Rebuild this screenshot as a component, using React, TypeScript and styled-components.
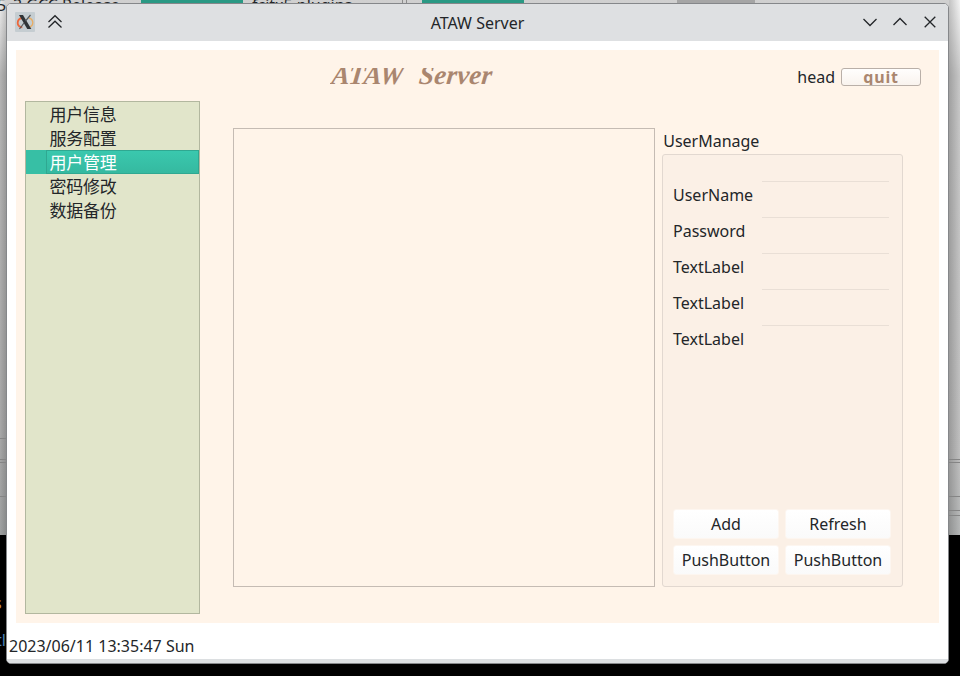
import React from "react";
import styled, { createGlobalStyle } from "styled-components";

const GlobalStyle = createGlobalStyle`
  * { box-sizing: border-box; }
  html, body { margin: 0; background: #000; overflow: hidden; }
  body { font-family: "Noto Sans", "Noto Sans CJK SC", sans-serif; font-size: 16px; color: #232629; }
`;

const Desktop = styled.div`
  position: relative;
  width: 960px;
  height: 676px;
  overflow: hidden;
  background: #000;
`;

const BackWindow = styled.div`
  position: absolute;
  left: 0;
  top: 0;
  width: 960px;
  height: 535px;
  background: linear-gradient(#d0d0d0, #bdbdbd 12%, #b4b4b4 88%, #adaeae);
`;

const Strip = styled.div<{ $side: "left" | "right" }>`
  position: absolute;
  ${(p) => p.$side}: 0;
  top: 0;
  width: ${(p) => (p.$side === "left" ? 6 : 11)}px;
  height: 535px;
  background: ${(p) =>
    p.$side === "left"
      ? "linear-gradient(90deg, rgba(0,0,0,0), rgba(0,0,0,0.14)), linear-gradient(#efefef, #b4b4b4 14%, #a8a8a8 80%, #9fa1a1)"
      : "linear-gradient(270deg, rgba(0,0,0,0), rgba(0,0,0,0.2)), linear-gradient(#f4f4f4, #c8c8c8 14%, #bfbfbf 85%, #b4b6b6)"};
`;

const Rule = styled.div<{ $y: number; $side: "left" | "right" }>`
  position: absolute;
  ${(p) => p.$side}: 0;
  top: ${(p) => p.$y}px;
  width: 12px;
  height: 1px;
  background: #858585;
`;

const Swatch = styled.div<{ $x: number; $w: number; $c: string }>`
  position: absolute;
  left: ${(p) => p.$x}px;
  top: 0;
  width: ${(p) => p.$w}px;
  height: 4px;
  background: ${(p) => p.$c};
`;

const BackText = styled.span<{ $x: number; $y: number; $c?: string }>`
  position: absolute;
  left: ${(p) => p.$x}px;
  top: ${(p) => p.$y}px;
  line-height: 22px;
  white-space: pre;
  color: ${(p) => p.$c || "#232629"};
`;

const Window = styled.main`
  position: absolute;
  left: 6px;
  top: 3px;
  width: 943px;
  height: 661px;
  border: 1px solid #85878a;
  border-radius: 5px;
  overflow: hidden;
  background: #fff;
  display: flex;
  flex-direction: column;
`;

const TitleBar = styled.header`
  flex: none;
  height: 37px;
  padding: 0 8px;
  display: grid;
  grid-template-columns: 160px 1fr 160px;
  align-items: center;
  background: #dee0e2;
`;

const TitleGroup = styled.div<{ $end?: boolean }>`
  display: flex;
  align-items: center;
  justify-content: ${(p) => (p.$end ? "flex-end" : "flex-start")};
  gap: 10px;
  padding-bottom: 1px;
  svg { display: block; }
`;

const TitleText = styled.h1`
  margin: 1px 0 0;
  font-size: 16px;
  font-weight: 400;
  line-height: 22px;
  text-align: center;
`;

const Canvas = styled.section`
  flex: none;
  width: 923px;
  height: 573px;
  margin: 9px 0 0 9px;
  padding: 16px 18px 0 9px;
  background: #fff4e9;
`;

const Header = styled.div`
  display: flex;
  height: 35px;
`;

const Banner = styled.div`
  width: 180px;
  height: 18px;
  margin: 2px 0 0 305px;
  padding-left: 1px;
  overflow: hidden;
  font: italic 700 27px/28px "Liberation Serif", serif;
  letter-spacing: 0.2px;
  word-spacing: 1px;
  color: #aa866f;
  white-space: pre;
  span {
    display: block;
    margin-top: -7px;
    transform: skewX(-6deg);
    transform-origin: 0 23px;
  }
`;

const HeadLabel = styled.span`
  margin-left: auto;
  line-height: 22px;
`;

const QuitButton = styled.button`
  width: 80px;
  height: 18px;
  margin: 2px 0 0 6px;
  padding: 0;
  border: 1px solid #b9afa8;
  border-radius: 3px;
  background: linear-gradient(#fffefd, #f9f3ee);
  color: #aa866f;
  font: 700 16px/16px "Noto Sans", sans-serif;
  letter-spacing: 0.8px;
  overflow: hidden;
`;

const Body = styled.div`
  display: flex;
  align-items: flex-start;
`;

const Sidebar = styled.nav`
  width: 175px;
  height: 513px;
  border: 1px solid #b2b79f;
  background: #e1e5ca;
`;

const NavItem = styled.div<{ $active?: boolean }>`
  height: 24px;
  padding-left: 20px;
  background: ${(p) => (p.$active ? "#37bfa5" : "transparent")};
  color: ${(p) => (p.$active ? "#fff" : "#232629")};
`;

const NavText = styled.div<{ $active?: boolean }>`
  height: 24px;
  padding-left: 2.6px;
  border: 1px solid ${(p) => (p.$active ? "#2fa891" : "transparent")};
  background: ${(p) => (p.$active ? "linear-gradient(#3ac8ae, #35b9a0)" : "none")};
  font: 17px/22px "Noto Sans CJK SC", sans-serif;
  letter-spacing: -0.3px;
`;

const ListView = styled.div`
  width: 422px;
  height: 459px;
  margin: 27px 0 0 33px;
  border: 1px solid #c5bbb3;
`;

const Manage = styled.section`
  width: 241px;
  margin: 29px 0 0 7px;
`;

const ManageTitle = styled.div`
  height: 24px;
  padding-left: 1.2px;
  line-height: 22px;
`;

const Group = styled.div`
  height: 433px;
  padding: 0 11px 11px 10px;
  border: 1px solid #e2d8d0;
  border-radius: 3px;
  background: #fbf0e6;
  display: flex;
  flex-direction: column;
  justify-content: space-between;
`;

const Fields = styled.div`
  display: flex;
  flex-direction: column;
`;

const Field = styled.label`
  display: flex;
  height: 36px;
  align-items: flex-start;
  &:first-child { margin-top: 26px; }
`;

const FieldName = styled.span`
  width: 89px;
  padding-top: 3px;
  line-height: 22px;
`;

const FieldLine = styled.span`
  width: 127px;
  height: 1px;
  background: #e9dfd6;
`;

const Buttons = styled.div`
  display: grid;
  grid-template-columns: 106px 106px;
  gap: 6px;
`;

const PushButton = styled.button`
  height: 30px;
  padding: 0;
  border: 1px solid #fdf6f0;
  border-radius: 3px;
  background: linear-gradient(#fff, #fafafa);
  color: #232629;
  font: 16px/22px "Noto Sans", sans-serif;
`;

const StatusBar = styled.footer`
  margin-top: auto;
  height: 24px;
  padding-left: 2px;
  line-height: 22px;
`;

const BottomFrame = styled.div`
  flex: none;
  height: 4px;
  background: #dcdfe1;
`;

const XLogo = () => (
  <svg width="20" height="20" viewBox="0 0 20 20">
    <rect width="20" height="20" rx="1" fill="#c5cdd1" />
    <path d="M7 6C4 6.6 2.7 8.6 2.7 10.9c0 2.4 1.8 4 4.6 4.4" fill="none" stroke="#ed683c" strokeWidth="1.8" />
    <path d="M14 6c2.6.7 3.8 2.6 3.8 4.8 0 2.6-2 4.3-5 4.8" fill="none" stroke="#e8ac62" strokeWidth="1.3" />
    <path d="M4 3h4l8.3 14h-4z" fill="#303437" />
    <path d="M15.5 3L10.5 9M9 11L4.5 17" stroke="#575b5e" strokeWidth="1.2" />
  </svg>
);

const Glyph = ({ d }: { d: string }) => (
  <svg width="20" height="20" viewBox="0 0 20 20" fill="none" stroke="#232629" strokeWidth="1.3">
    <path d={d} />
  </svg>
);

const nav = ["用户信息", "服务配置", "用户管理", "密码修改", "数据备份"];
const fields = ["UserName", "Password", "TextLabel", "TextLabel", "TextLabel"];
const buttons = ["Add", "Refresh", "PushButton", "PushButton"];

export default function App() {
  return (
    <Desktop>
      <GlobalStyle />
      <BackWindow />
      <Strip $side="left" />
      <Strip $side="right" />
      {[438, 459, 462, 496].map((y) => <Rule key={y} $y={y} $side="left" />)}
      {[459, 462, 496, 510, 515].map((y) => <Rule key={y} $y={y} $side="right" />)}
      <Swatch $x={141} $w={102} $c="#2a9984" />
      <Swatch $x={422} $w={102} $c="#2a9984" />
      <Swatch $x={677} $w={78} $c="#a5a5a5" />
      <Swatch $x={402} $w={1} $c="#8c8c8c" />
      <Swatch $x={406} $w={1} $c="#8c8c8c" />
      <BackText $x={-3} $y={-6}>5</BackText>
      <BackText $x={13} $y={-6}>2 GCC Release</BackText>
      <BackText $x={252} $y={-6}>fcitx5 plugins</BackText>
      <BackText $x={-6} $y={592} $c="#c9984e">s</BackText>
      <BackText $x={-4} $y={629} $c="#4a80b8">tl</BackText>
      <Window>
        <TitleBar>
          <TitleGroup>
            <XLogo />
            <Glyph d="M3.5 10L10 3.7 16.5 10M3.5 15.5L10 9.2l6.5 6.3" />
          </TitleGroup>
          <TitleText>ATAW Server</TitleText>
          <TitleGroup $end>
            <Glyph d="M3.5 7L10 13.5 16.5 7" />
            <Glyph d="M3.5 13L10 6.5 16.5 13" />
            <Glyph d="M4.7 4.7l10.6 10.6M15.3 4.7L4.7 15.3" />
          </TitleGroup>
        </TitleBar>
        <Canvas>
          <Header>
            <Banner><span>ATAW  Server</span></Banner>
            <HeadLabel>head</HeadLabel>
            <QuitButton>quit</QuitButton>
          </Header>
          <Body>
            <Sidebar>
              {nav.map((n, i) => (
                <NavItem key={n} $active={i === 2}><NavText $active={i === 2}>{n}</NavText></NavItem>
              ))}
            </Sidebar>
            <ListView />
            <Manage>
              <ManageTitle>UserManage</ManageTitle>
              <Group>
                <Fields>
                  {fields.map((f, i) => (
                    <Field key={i}><FieldName>{f}</FieldName><FieldLine /></Field>
                  ))}
                </Fields>
                <Buttons>
                  {buttons.map((b, i) => <PushButton key={i}>{b}</PushButton>)}
                </Buttons>
              </Group>
            </Manage>
          </Body>
        </Canvas>
        <StatusBar>2023/06/11 13:35:47 Sun</StatusBar>
        <BottomFrame />
      </Window>
    </Desktop>
  );
}
